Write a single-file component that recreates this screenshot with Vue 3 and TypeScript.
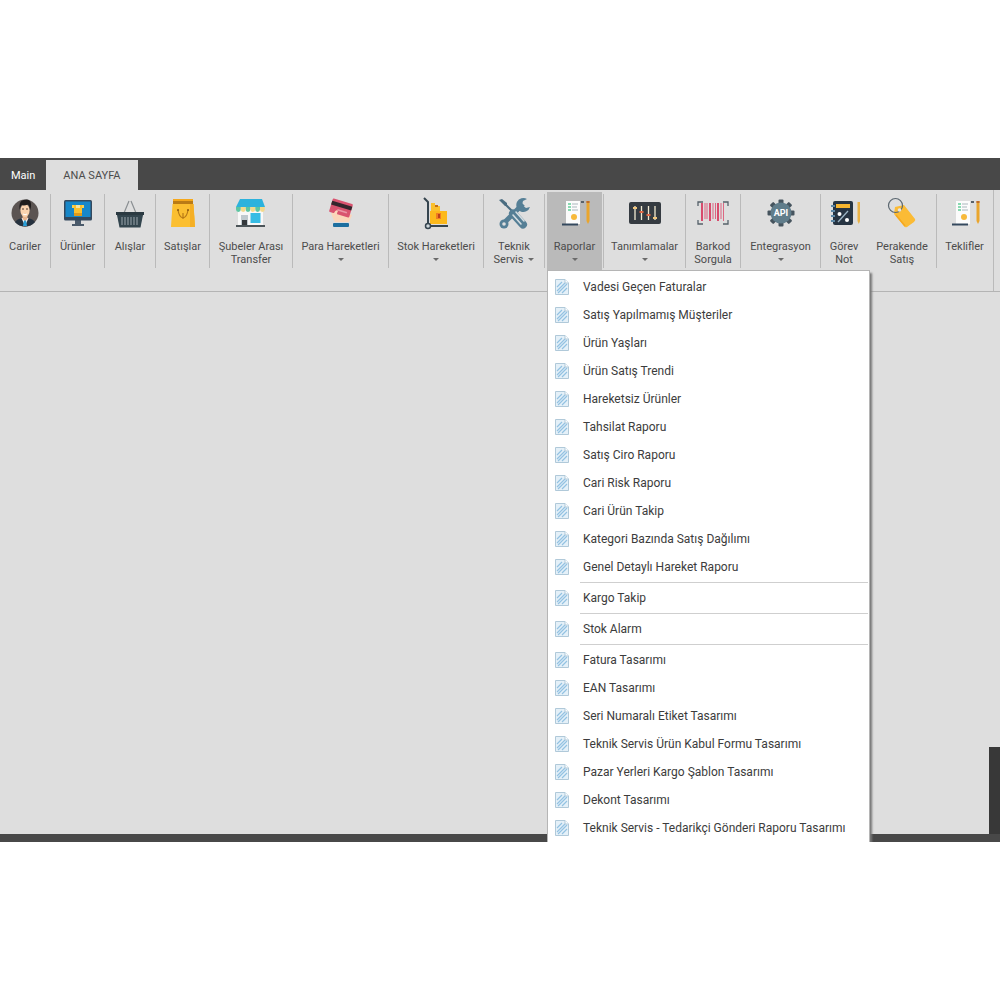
<script setup lang="ts">
interface RibbonItem {
  icon: string
  lines: string[]
  arrow?: 'below' | 'inline'
  active?: boolean
  joined?: boolean
}

const ribbon: RibbonItem[] = [
  { icon: 'person', lines: ['Cariler'] },
  { icon: 'monitor', lines: ['Ürünler'] },
  { icon: 'basket', lines: ['Alışlar'] },
  { icon: 'bag', lines: ['Satışlar'] },
  { icon: 'store', lines: ['Şubeler Arası', 'Transfer'] },
  { icon: 'card', lines: ['Para Hareketleri'], arrow: 'below' },
  { icon: 'trolley', lines: ['Stok Hareketleri'], arrow: 'below' },
  { icon: 'tools', lines: ['Teknik', 'Servis'], arrow: 'inline' },
  { icon: 'report', lines: ['Raporlar'], arrow: 'below', active: true },
  { icon: 'sliders', lines: ['Tanımlamalar'], arrow: 'below' },
  { icon: 'barcode', lines: ['Barkod', 'Sorgula'] },
  { icon: 'api', lines: ['Entegrasyon'], arrow: 'below' },
  { icon: 'notebook', lines: ['Görev', 'Not'], joined: true },
  { icon: 'tag', lines: ['Perakende', 'Satış'] },
  { icon: 'report', lines: ['Teklifler'] },
]

const menuGroups: string[][] = [
  [
    'Vadesi Geçen Faturalar',
    'Satış Yapılmamış Müşteriler',
    'Ürün Yaşları',
    'Ürün Satış Trendi',
    'Hareketsiz Ürünler',
    'Tahsilat Raporu',
    'Satış Ciro Raporu',
    'Cari Risk Raporu',
    'Cari Ürün Takip',
    'Kategori Bazında Satış Dağılımı',
    'Genel Detaylı Hareket Raporu',
  ],
  ['Kargo Takip'],
  ['Stok Alarm'],
  [
    'Fatura Tasarımı',
    'EAN Tasarımı',
    'Seri Numaralı Etiket Tasarımı',
    'Teknik Servis Ürün Kabul Formu Tasarımı',
    'Pazar Yerleri Kargo Şablon Tasarımı',
    'Dekont Tasarımı',
    'Teknik Servis - Tedarikçi Gönderi Raporu Tasarımı',
  ],
]

const gearAngles = [0, 45, 90, 135, 180, 225, 270, 315]
</script>

<template>
  <main class="app">
    <header class="tabs">
      <button type="button" class="tab">Main</button>
      <button type="button" class="tab selected">ANA SAYFA</button>
    </header>

    <div class="ribbon">
      <nav class="groups">
        <div v-for="(item, i) in ribbon" :key="i" class="cell" :class="{ joined: item.joined }">
          <button type="button" class="tool" :class="{ active: item.active }">
            <svg class="icon" viewBox="0 0 36 36" aria-hidden="true">
              <g v-if="item.icon === 'person'">
                <circle cx="18" cy="18" r="13.500" fill="#5b5452" />
                <path d="M8 27q2-3 7-4l3 2 3-2q5 1 7 4-4 4.500-10 4.500T8 27z" fill="#26323f" />
                <path d="M14.500 23l3.500 8 3.500-8z" fill="#fff" />
                <path d="M17 25h2l1 6h-4z" fill="#2a9fd8" />
                <path d="M15.500 20h5v4l-2.500 2-2.500-2z" fill="#e8b48e" />
                <ellipse cx="18" cy="15.500" rx="4.600" ry="6.500" fill="#fbd3ae" />
                <path d="M12.500 15q-1-9 4-10 7-2 7.500 4 .300 3-.800 6-.800-4.500-2.200-5.500-4 1.500-6.500.500Q13 12 12.500 15z" fill="#1f1c1c" />
                <path d="M15 14h2M19 14h2" stroke="#4d3a30" />
                <path d="M16 19q2 1.500 4 0" stroke="#fff" fill="none" />
              </g>
              <g v-else-if="item.icon === 'monitor'">
                <path d="M15 25h6v4h3v2H12v-2h3z" fill="#4a5a6b" />
                <rect x="4" y="5" width="28" height="20.500" rx="1.500" fill="#34495e" />
                <rect x="5.500" y="6.500" width="25" height="15.500" fill="#1787c9" />
                <path d="M12 10h2.500v3H12zM21.500 10H24v3h-2.500z" fill="#fbd052" />
                <path d="M14 10h8v10h-8z" fill="#fbc02d" />
                <path d="M16 10h4v3h-4z" fill="#f6e3a1" />
                <path d="M14 18h8v3h-8z" fill="#e09a1b" />
              </g>
              <g v-else-if="item.icon === 'basket'">
                <path d="M12 18l5-12M24 18L19 6" stroke="#8a8f92" stroke-width="1.200" fill="none" />
                <path d="M4 17h28v3H4z" fill="#2b3a42" />
                <path d="M5 20h26l-2.500 12.500h-21z" fill="#33454e" />
                <path d="M10 22v8M13 22v8M16 22v8M19 22v8M22 22v8M25 22v8" stroke="#8a979d" stroke-width="1.200" />
              </g>
              <g v-else-if="item.icon === 'bag'">
                <path d="M8 4h20v6H8z" fill="#b97b16" />
                <path d="M8 4h20v2H8z" fill="#f5a81c" />
                <path d="M7.500 9h21L30 32H6z" fill="#fbbf31" />
                <path d="M25 9h3.500L30 32h-5z" fill="#f5af25" />
                <path d="M13 15q1 7 5 8 4-1 5-8M18 18v6" stroke="#b87a16" fill="none" stroke-width="1.200" />
                <circle cx="13" cy="15" r="1" fill="#8b5a10" />
                <circle cx="23" cy="15" r="1" fill="#8b5a10" />
              </g>
              <g v-else-if="item.icon === 'store'">
                <path d="M5 14h25v16H5z" fill="#f8f8f8" />
                <path d="M7 4h22l3 8H3z" fill="#2cb2dc" />
                <path d="M3 12h4.800v2.500a2.400 2.400 0 0 1-4.800 0zM12.600 12h4.800v2.500a2.400 2.400 0 0 1-4.800 0zM22.200 12H27v2.500a2.400 2.400 0 0 1-4.800 0z" fill="#5cc6a2" />
                <path d="M7.800 12h4.800v2.500a2.400 2.400 0 0 1-4.800 0zM17.400 12h4.800v2.500a2.400 2.400 0 0 1-4.800 0zM27 12h4.800v2.500a2.400 2.400 0 0 1-4.800 0z" fill="#f3d98c" />
                <path d="M8 20h7v10H8z" fill="#bfc9ce" />
                <path d="M9 25h5v5H9z" fill="#34383b" />
                <path d="M17.500 18h10v10h-10z" fill="#36bce4" />
                <path d="M3 30h29v2H3z" fill="#4c5559" />
              </g>
              <g v-else-if="item.icon === 'card'">
                <path d="M9 16l6-2 14 6-3 7H12q-3-4-3-11z" fill="#fbd5ba" />
                <g transform="rotate(17 18 13)">
                  <rect x="7.500" y="6" width="21" height="14" rx="1" fill="#d9536f" />
                  <rect x="7.500" y="8.500" width="21" height="4" fill="#33252c" />
                  <rect x="15" y="15" width="10" height="1.500" fill="#eb96a6" />
                </g>
                <path d="M8 18l3 0q2-4 4-2-2 3 0 6l-3 3q-3-3-4-7z" fill="#fbd5ba" />
                <rect x="10" y="28" width="16" height="4" rx="1" fill="#1e6f9f" />
              </g>
              <g v-else-if="item.icon === 'trolley'">
                <path d="M13 8h4v3h5v8h-9z" fill="#fbc02d" />
                <path d="M12 16h17v13H12z" fill="#fcb91c" />
                <path d="M17 10h3v2h-3z" fill="#c46e16" />
                <path d="M18 18h5v6h-5z" fill="#f07d22" />
                <path d="M20 19h2v4h-2z" fill="#b9401a" />
                <path d="M6 3l4 4v22M12 31h18" stroke="#36454f" stroke-width="2" fill="none" stroke-linejoin="round" />
                <circle cx="10" cy="31" r="2.500" fill="#cfd8dc" stroke="#36454f" stroke-width="1.500" />
              </g>
              <g v-else-if="item.icon === 'tools'">
                <path d="M3 5l3-1 5 4 0 3-2 0z" fill="#4a6c80" />
                <path d="M9 9l9 9" stroke="#4a6c80" stroke-width="2" />
                <path d="M7 29L27 9" stroke="#557f96" stroke-width="5" />
                <path d="M31 4a7 7 0 1 0 3 8l-4 1-4-3 1-4z" fill="#557f96" />
                <circle cx="8" cy="29" r="4.500" fill="#557f96" />
                <circle cx="8" cy="29" r="1.800" fill="#dedede" />
                <path d="M17 18.500l10 11" stroke="#557f96" stroke-width="8" stroke-linecap="round" />
                <path d="M17 20l8 9M20 17l8 9" stroke="#d5dee2" stroke-width="1.600" stroke-linecap="round" />
              </g>
              <g v-else-if="item.icon === 'report'">
                <path d="M9 6h14v23H9z" fill="#fbfbfb" />
                <path d="M11 9h3M11 12h3M11 15h3" stroke="#63cf99" stroke-width="1.300" />
                <path d="M15 9h6M15 12h5M15 15h6" stroke="#aab7bd" />
                <circle cx="17" cy="22" r="3" fill="#f7b93a" />
                <path d="M5 28.500h16v2H5z" fill="#34495e" />
                <path d="M24 6h3v2h-3z" fill="#59626a" />
                <path d="M29.500 6h3v20l-1.500 3-1.500-3z" fill="#eaa52c" />
                <path d="M29.500 6h3v2h-3z" fill="#bd6b2d" />
              </g>
              <g v-else-if="item.icon === 'sliders'">
                <rect x="2" y="7" width="32" height="22" rx="2" fill="#353b41" />
                <path d="M8 11v14M14.500 11v14M21.500 11v14M28 11v14" stroke="#f2ead2" stroke-width="1.300" />
                <path d="M6 13h4M26 23h4" stroke="#f2c67c" stroke-width="2" />
                <path d="M12.500 17h4M19.500 20h4" stroke="#df6745" stroke-width="2" />
              </g>
              <g v-else-if="item.icon === 'barcode'">
                <path d="M3 11V7h5M28 7h5v4M33 25v4h-5M8 29H3v-4" stroke="#55616a" stroke-width="1.300" fill="none" />
                <path d="M7 8v18M15 8v18M23 8v18" stroke="#d84c6d" stroke-width="2" />
                <path d="M10 8v16M12 8v16M18 8v16M20.500 8v16M26 8v16M28.500 8v18" stroke="#dc6782" stroke-width="1" />
              </g>
              <g v-else-if="item.icon === 'api'">
                <rect v-for="a in gearAngles" :key="a" x="15.500" y="4.500" width="5" height="6" rx="1" fill="#46545e" :transform="`rotate(${a} 18 18)`" />
                <circle cx="18" cy="18" r="10.500" fill="#607d8b" />
                <text x="18" y="21" text-anchor="middle" class="api-text">API</text>
              </g>
              <g v-else-if="item.icon === 'notebook'">
                <rect x="7" y="6" width="20" height="24" rx="2" fill="#263442" />
                <path d="M5 11h4M5 16h4M5 21h4M5 26h4" stroke="#5d88a6" stroke-width="2" />
                <rect x="10" y="9" width="14" height="4" fill="#f6b52f" />
                <path d="M22 16L12 27" stroke="#9cb5c5" stroke-width="1.300" />
                <circle cx="13.500" cy="19" r="2" fill="#fff" />
                <circle cx="21" cy="25" r="2" fill="#fff" />
                <path d="M31.500 7h2.500v19l-1.200 3-1.300-3z" fill="#eab347" />
              </g>
              <g v-else-if="item.icon === 'tag'">
                <path d="M11 12l9-2 11 14q1 1-1 3l-7 5q-2 1-3-1L10 19z" fill="#fbbb35" />
                <path d="M12 20l9 11" stroke="#f5a81f" stroke-width="1.500" />
                <circle cx="11.500" cy="10.500" r="7" fill="none" stroke="#5b6770" stroke-width="1.200" />
                <circle cx="15.500" cy="15" r="1.800" fill="#e6e6e6" />
              </g>
            </svg>
            <span v-for="(line, n) in item.lines" :key="n" class="line">
              {{ line }}<i v-if="item.arrow === 'inline' && n === item.lines.length - 1" class="arrow" />
            </span>
            <span v-if="item.arrow === 'below'" class="line"><i class="arrow" /></span>
          </button>

          <div v-if="item.active" class="menu" role="menu">
            <div v-for="(group, g) in menuGroups" :key="g" class="menu-group">
              <button v-for="entry in group" :key="entry" type="button" role="menuitem" class="menu-item">
                <svg class="doc" viewBox="0 0 14 16" aria-hidden="true">
                  <path d="M.500 .500h9.500l3.500 3.500v11.500H.500z" fill="#e4f0f8" stroke="#b0c9d9" />
                  <path d="M2 8l5-5M2 12l8-8M3 14l9-9M7 14l5-5" stroke="#93c2e2" stroke-width="1.200" />
                  <path d="M10 .500v3.500h3.500" fill="#fff" stroke="#b0c9d9" />
                </svg>
                <span>{{ entry }}</span>
              </button>
            </div>
          </div>
        </div>
      </nav>
    </div>

    <section class="workspace">
      <div class="side-panel" />
    </section>
    <footer class="status" />
  </main>
</template>

<style>
body {
  margin: 0;
  background: #fff;
}
</style>

<style scoped>
.app {
  position: relative;
  margin-top: 158px;
  overflow: hidden;
  background: #dedede;
  font-family: Roboto, "Noto Sans", sans-serif;
  font-size: 11px;
  color: #4c4c4c;
}

button {
  margin: 0;
  padding: 0;
  border: 0;
  background: none;
  font: inherit;
  color: inherit;
}

.tabs {
  display: flex;
  align-items: stretch;
  height: 32px;
  padding-top: 2px;
  box-sizing: border-box;
  background: #484848;
}

.tab {
  padding: 0 11px;
  color: #fff;
}

.tab.selected {
  padding: 0 17px;
  background: #dedede;
  color: #4c4c4c;
}

.ribbon {
  height: 101px;
  padding-right: 6px;
  border-bottom: 1px solid #b4b4b4;
}

.groups {
  display: grid;
  grid-template-columns: 51fr 54fr 51fr 54fr 83fr 96fr 95fr 61fr 59fr 82fr 55fr 80fr 47fr 69fr 56fr;
  align-items: start;
  height: 101px;
  border-right: 1px solid #bababa;
}

.cell {
  position: relative;
  height: 74px;
  margin-top: 4px;
  border-right: 1px solid #bababa;
}

.cell.joined,
.cell:last-child {
  border-right-color: transparent;
}

.tool {
  display: flex;
  flex-direction: column;
  align-items: center;
  width: 100%;
  height: 78px;
  margin-top: -2px;
  padding-top: 3px;
  white-space: nowrap;
}

.tool.active {
  width: auto;
  min-width: calc(100% - 3px);
  margin-left: 2px;
  background: #bababa;
}

.icon {
  width: 36px;
  height: 36px;
  margin-bottom: 9px;
}

.api-text {
  font-size: 9px;
  font-weight: 700;
  fill: #fff;
}

.line {
  display: flex;
  align-items: center;
  justify-content: center;
  gap: 5px;
  height: 13px;
  line-height: 13px;
}

.arrow {
  border: 3px solid transparent;
  border-top-color: #6a6a6a;
  border-bottom: 0;
}

.menu {
  position: absolute;
  z-index: 2;
  top: 76px;
  left: 2px;
  width: 321px;
  padding: 2px 0;
  border: 1px solid #b5b5b5;
  border-bottom: 0;
  background: #fff;
  box-shadow: 2px 3px 2px #777;
  font-size: 12px;
  color: #3c3c3c;
}

.menu-group + .menu-group::before {
  content: "";
  display: block;
  height: 1px;
  margin: 1px 1px 1px 32px;
  background: #cfcfcf;
}

.menu-item {
  display: flex;
  align-items: center;
  gap: 14px;
  width: 100%;
  height: 28px;
  padding-left: 7px;
  white-space: nowrap;
}

.doc {
  width: 14px;
  height: 16px;
}

.workspace {
  display: flex;
  align-items: flex-end;
  justify-content: flex-end;
  height: 542px;
}

.side-panel {
  width: 11px;
  height: 87px;
  background: #383838;
}

.status {
  height: 8px;
  background: #484848;
}
</style>
